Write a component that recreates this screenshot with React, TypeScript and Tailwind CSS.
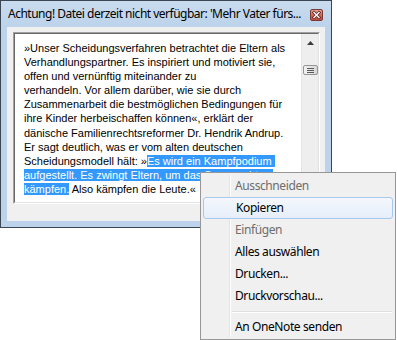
import React from "react";

const lines: { pre?: string; sel?: string; post?: string }[] = [
  { pre: "»Unser Scheidungsverfahren betrachtet die Eltern als" },
  { pre: "Verhandlungspartner. Es inspiriert und motiviert sie," },
  { pre: "offen und vernünftig miteinander zu" },
  { pre: "verhandeln. Vor allem darüber, wie sie durch" },
  { pre: "Zusammenarbeit die bestmöglichen Bedingungen für" },
  { pre: "ihre Kinder herbeischaffen können«, erklärt der" },
  { pre: "dänische Familienrechtsreformer Dr. Hendrik Andrup." },
  { pre: "Er sagt deutlich, was er vom alten deutschen" },
  { pre: "Scheidungsmodell hält: »", sel: "Es wird ein Kampfpodium " },
  { sel: "aufgestellt. Es zwingt Eltern, um das Sorgerecht zu" },
  { sel: "kämpfen.", post: " Also kämpfen die Leute.«" },
];

const menuItems: { label: string; disabled?: boolean; hot?: boolean; sep?: boolean }[] = [
  { label: "Ausschneiden", disabled: true },
  { label: "Kopieren", hot: true },
  { label: "Einfügen", disabled: true },
  { label: "Alles auswählen" },
  { label: "Drucken..." },
  { label: "Druckvorschau..." },
  { label: "", sep: true },
  { label: "An OneNote senden" },
];

export default function App() {
  return (
    <div className="relative w-[397px] h-[340px] bg-white overflow-hidden">
      {/* Window */}
      <div className="w-[332px] h-[228px] border border-[#3a4654] bg-[#bcd3eb] flex flex-col">
        {/* Title bar */}
        <div className="h-[26px] flex items-center pl-[7px] pr-[8px] bg-gradient-to-b from-[#c9dbee] to-[#bcd3eb]">
          <span
            className="flex-1 text-[12px] tracking-[-0.5px] text-black whitespace-nowrap overflow-hidden"
            style={{ fontFamily: '"Noto Sans", "Open Sans", sans-serif' }}
          >
            Achtung! Datei derzeit nicht verfügbar: 'Mehr Vater fürs...
          </span>
          <svg width="13" height="12" viewBox="0 0 13 12" className="ml-[2px] mt-[2px]">
            <defs>
              <linearGradient id="cb" x1="0" y1="0" x2="0" y2="1">
                <stop offset="0" stopColor="#e8a89c" />
                <stop offset="0.5" stopColor="#d0675a" />
                <stop offset="1" stopColor="#c2493c" />
              </linearGradient>
            </defs>
            <rect x="0.5" y="0.5" width="12" height="11" rx="1.5" fill="url(#cb)" stroke="#7a3a34" />
            <path d="M4 3.5 L9 8.5 M9 3.5 L4 8.5" stroke="#5a2420" strokeWidth="3" strokeLinecap="square" />
            <path d="M4 3.5 L9 8.5 M9 3.5 L4 8.5" stroke="#ffffff" strokeWidth="1.4" strokeLinecap="square" />
          </svg>
        </div>
        {/* Client area */}
        <div className="mx-[6px] h-[194px] bg-[#f0f0f0] pt-[5px] pl-[6px] pr-[5px]">
          <div className="h-[172px] border-t border-l border-[#a0a0a0] border-b border-r border-b-white border-r-white">
            <div className="h-full border-t border-l border-[#696969] border-b border-r border-b-[#e3e3e3] border-r-[#e3e3e3] bg-white flex">
              <div
                className="flex-1 pl-[9px] pt-[7px] text-[11px] leading-[14.1px] text-black"
                style={{ fontFamily: '"Liberation Sans", Arial, sans-serif' }}
              >
                {lines.map((l, i) => (
                  <div key={i} className="whitespace-pre h-[14.1px]">
                    {l.pre}
                    {l.sel && <span className="bg-[#3399ff] text-white">{l.sel}</span>}
                    {l.post}
                  </div>
                ))}
              </div>
              {/* Scrollbar */}
              <div className="w-[17px] bg-[#eeeeee] border-l border-[#e4e4e4] flex flex-col items-center">
                <div className="h-[17px] w-full flex items-center justify-center">
                  <svg width="7" height="4" viewBox="0 0 7 4">
                    <path d="M3.5 0 L7 4 L0 4 Z" fill="#3c3c3c" />
                  </svg>
                </div>
                <div className="mt-[14px] w-[15px] h-[10px] rounded-[2px] border border-[#959595] bg-gradient-to-r from-[#f2f2f2] to-[#d8d8d8] flex flex-col items-center justify-center gap-[1px]">
                  <div className="w-[7px] h-[1px] bg-[#5a5a5a]" />
                  <div className="w-[7px] h-[1px] bg-[#5a5a5a]" />
                  <div className="w-[7px] h-[1px] bg-[#5a5a5a]" />
                </div>
              </div>
            </div>
          </div>
        </div>
      </div>

      {/* Context menu */}
      <div
        className="absolute left-[200px] top-[172px] w-[196px] h-[168px] bg-[#f0f0f0] border border-[#979797] p-[2px] text-[12px] tracking-[-0.4px]"
        style={{ fontFamily: '"Noto Sans", "Open Sans", sans-serif' }}
      >
        <div className="absolute left-[28px] top-[2px] bottom-[2px] w-[1px] bg-[#e2e3e3]" />
        <div className="absolute left-[29px] top-[2px] bottom-[2px] w-[1px] bg-white" />
        <div className="relative flex flex-col">
          {menuItems.map((m, i) =>
            m.sep ? (
              <div key={i} className="h-[9px] flex flex-col justify-center pl-[29px] pr-[1px]">
                <div className="h-[1px] bg-[#e0e0e0]" />
                <div className="h-[1px] bg-white" />
              </div>
            ) : (
              <div
                key={i}
                className={
                  "h-[22px] flex items-center pl-[32px] " +
                  (m.hot
                    ? "rounded-[3px] border border-[#a8c8ee] bg-gradient-to-b from-[#f4f8fd] to-[#e6eef9] pl-[31px] "
                    : "") +
                  (m.disabled ? "text-[#6d6d6d]" : "text-black")
                }
              >
                {m.label}
              </div>
            )
          )}
        </div>
      </div>
    </div>
  );
}
